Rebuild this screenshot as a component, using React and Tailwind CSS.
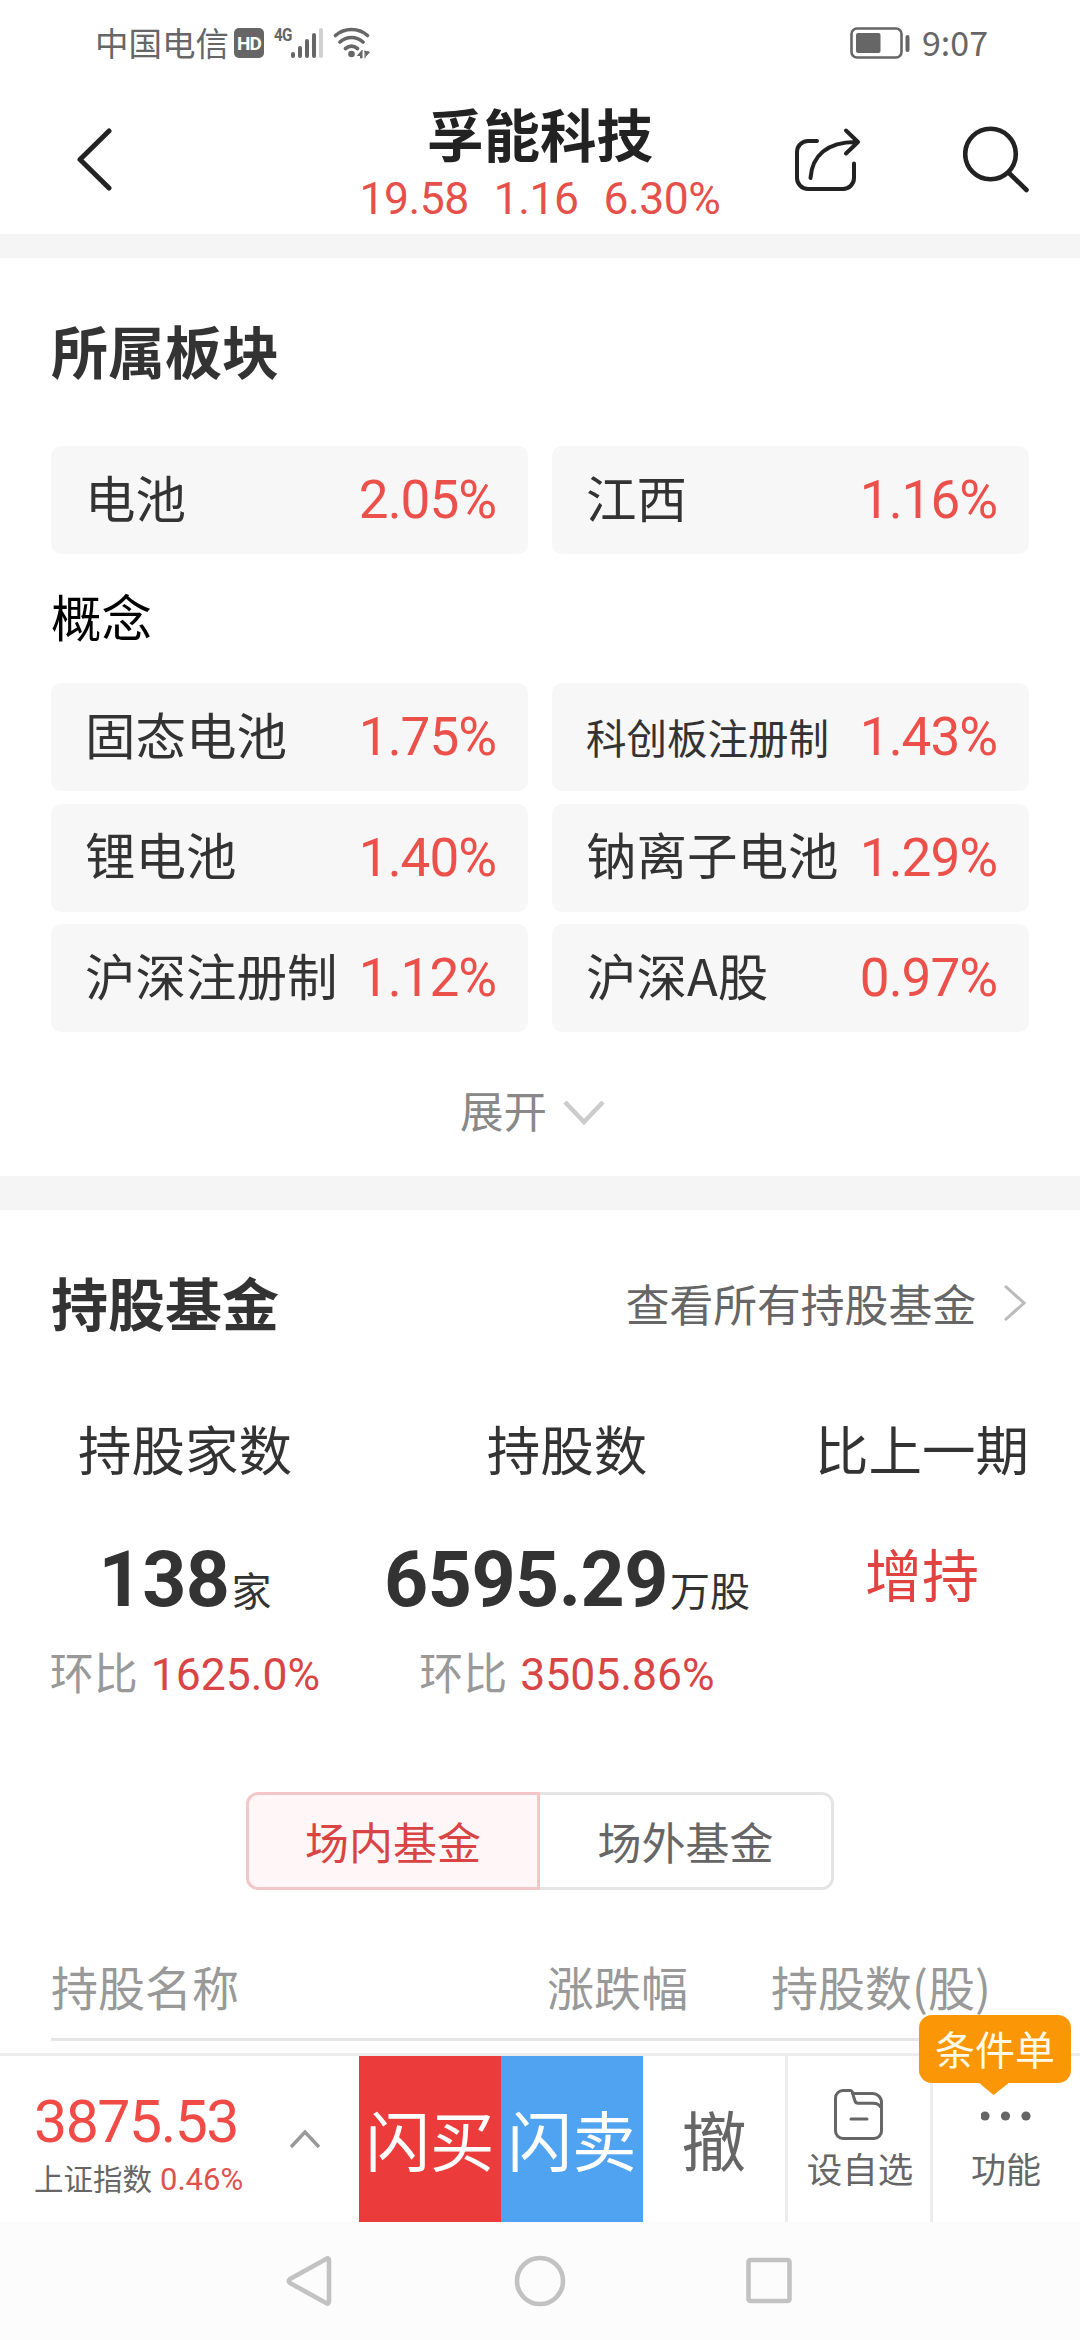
import React from 'react';
import { clsx } from 'clsx';

const sectors = [
    { name: '电池', change: '2.05%' },
    { name: '江西', change: '1.16%' },
];

const concepts = [
    { name: '固态电池', change: '1.75%' },
    { name: '科创板注册制', change: '1.43%', small: true },
    { name: '锂电池', change: '1.40%' },
    { name: '钠离子电池', change: '1.29%' },
    { name: '沪深注册制', change: '1.12%' },
    { name: '沪深A股', change: '0.97%' },
];

const Num = ({ className, children }) => (
    <span className={clsx("font-['Roboto','Noto_Sans_CJK_SC',sans-serif]", className)}>{children}</span>
);

const StatusBar = () => (
    <div className="h-[86px] pl-[95px] pr-[92px] flex items-center text-[#666]">
        <span className="-mt-[2px] text-[33.5px] leading-none">中国电信</span>
        <span className="ml-[5px] w-[30px] h-[30px] rounded-[5px] bg-[#666] text-white text-[19px] font-bold leading-none tracking-[-1px] flex items-center justify-center font-['Roboto',sans-serif]">HD</span>
        <span className="ml-[10px] -mt-[18px] w-[18px] text-[19px] font-bold leading-none tracking-[-1px] scale-x-[0.8] origin-left font-['Roboto',sans-serif]">4G</span>
        <svg className="-ml-[1px] w-[33px] h-[32px]" viewBox="0 0 33 32" fill="none" strokeWidth="4" strokeLinecap="round">
            <path d="M2 27v2M9 21v8M16 14v15M23 8v21" stroke="#666" />
            <path d="M30 3v26" stroke="#d0d0d0" />
        </svg>
        <svg className="ml-[9px] w-[38px] h-[32px]" viewBox="0 0 38 32" fill="none" stroke="#666" strokeWidth="3.6" strokeLinecap="round">
            <path d="M2.5 8.5C11.5 0.5 25.5 0.5 34.5 8.5M7 15C14 9 23 9 30 15M12.5 21.5C16.5 18.2 20.5 18.2 24.5 21.5" />
            <circle cx="18.5" cy="27" r="3.3" fill="#666" stroke="none" />
            <path d="M29 23.5V31H27.5V28.5H24.5L29 23.5ZM32 24V31M32 24.5L36.5 25L32.5 29.5" strokeWidth="1" fill="#666" />
        </svg>
        <svg className="ml-auto w-[60px] h-[32px]" viewBox="0 0 60 32" fill="none">
            <rect x="1.5" y="1.5" width="50" height="29" rx="5.5" stroke="#666" strokeWidth="2.6" />
            <rect x="6" y="6" width="24.5" height="20" rx="2" fill="#666" />
            <rect x="55.5" y="8" width="4" height="17" rx="2" fill="#666" />
        </svg>
        <span className="ml-[12px] -mt-[2px] text-[34px] leading-none">9:07</span>
    </div>
);

const Header = () => (
    <header className="h-[148px] px-[49px] grid grid-cols-[1fr_auto_1fr]">
        <svg className="mt-[41px] ml-[27px] w-[38px] h-[64px]" viewBox="0 0 38 64" fill="none" stroke="#222" strokeWidth="5" strokeLinecap="round" strokeLinejoin="round">
            <path d="M33 4L4 32.5L33 61" />
        </svg>
        <div className="flex flex-col items-center">
            <h1 className="mt-[16px] text-[56.5px] leading-[60px] font-bold text-[#222]">孚能科技</h1>
            <div className="mt-[14px] flex gap-[25px] text-[44.5px] leading-[46px] tracking-[-0.5px] text-[#e5504b]">
                <Num>19.58</Num>
                <Num>1.16</Num>
                <Num>6.30%</Num>
            </div>
        </div>
        <div className="mt-[38px] flex justify-end gap-[102px] text-[#222]">
            <svg className="w-[68px] h-[70px]" viewBox="0 0 68 70" fill="none" stroke="currentColor" strokeWidth="4" strokeLinecap="round" strokeLinejoin="round">
                <path d="M24 17H15A11 11 0 0 0 4 28V54A11 11 0 0 0 15 65H50A11 11 0 0 0 61 54V39.5" />
                <path d="M17.5 54C19 32 34 17.5 64 18M53 6.5L65 18L53 29.5" />
            </svg>
            <svg className="w-[68px] h-[70px]" viewBox="0 0 68 70" fill="none" stroke="currentColor" strokeWidth="4.6" strokeLinecap="round">
                <circle cx="27.5" cy="30" r="25.3" />
                <path d="M46 49L63.5 66" />
            </svg>
        </div>
    </header>
);

const SectorCard = ({ name, change, small }) => (
    <div className="h-[108px] pl-[34px] pr-[32px] rounded-[10px] bg-[#f7f7f7] flex items-center justify-between">
        <span className={clsx('text-[#333] leading-none', small ? 'text-[40.5px]' : 'text-[50.5px] -mt-[8px]')}>{name}</span>
        <Num className="mt-[1px] text-[53px] leading-none tracking-[-1px] text-[#ec504b]">{change}</Num>
    </div>
);

const SectionTitle = ({ children }) => (
    <h2 className="text-[57px] leading-[60px] font-bold text-[#333]">{children}</h2>
);

const Sectors = () => (
    <section className="h-[918px] px-[51px] pt-[61px]">
        <SectionTitle>所属板块</SectionTitle>
        <div className="mt-[67px] grid grid-cols-2 gap-x-6">
            {sectors.map((s) => <SectorCard key={s.name} {...s} />)}
        </div>
        <h3 className="mt-[35px] text-[50.5px] leading-[52px] text-black">概念</h3>
        <div className="mt-[42px] grid grid-cols-2 gap-x-6 gap-y-[12.5px]">
            {concepts.map((s) => <SectorCard key={s.name} {...s} />)}
        </div>
        <button className="mt-[54px] ml-[409px] flex items-center text-[43.5px] leading-[48px] text-[#888]">
            展开
            <svg className="ml-[16px] mt-[5px] w-[42px] h-[28px]" viewBox="0 0 42 28" fill="none" stroke="#ccc" strokeWidth="4.5">
                <path d="M2 3L21 23L40 3" />
            </svg>
        </button>
    </section>
);

const Stat = ({ value, unit, ratio }) => (
    <>
        <div className="flex items-baseline whitespace-nowrap text-[#333]">
            <Num className="text-[77px] leading-[80px] font-bold tracking-[-0.5px]">{value}</Num>
            <span className="ml-[2px] text-[40px] leading-none">{unit}</span>
        </div>
        <div className="flex items-baseline whitespace-nowrap text-[44px] leading-[48px] text-[#999]">
            环比
            <Num className="ml-[13px] text-[44.5px] text-[#d94545]">{ratio}</Num>
        </div>
    </>
);

const FundHoldings = () => (
    <section className="h-[843px] px-[51px] pt-[61px] flex flex-col">
        <div className="h-[60px] flex items-center justify-between">
            <SectionTitle>持股基金</SectionTitle>
            <a className="mt-[4px] flex items-center text-[43.8px] leading-[60px] text-[#666]">
                查看所有持股基金
                <svg className="ml-[27px] mr-[2px] w-[24px] h-[38px]" viewBox="0 0 24 38" fill="none" stroke="#bbb" strokeWidth="3">
                    <path d="M2 2L21 19L2 36" />
                </svg>
            </a>
        </div>

        <div className="mt-[87px] h-[281px] flex justify-between">
            <div className="w-[268px] flex flex-col items-center">
                <div className="text-[53.5px] leading-[60px] text-[#333]">持股家数</div>
                <div className="mt-[62px] h-[159px] flex flex-col items-center justify-between">
                    <Stat value="138" unit="家" ratio="1625.0%" />
                </div>
            </div>
            <div className="w-[370px] flex flex-col items-center">
                <div className="text-[53.5px] leading-[60px] text-[#333]">持股数</div>
                <div className="mt-[62px] h-[159px] flex flex-col items-center justify-between">
                    <Stat value="6595.29" unit="万股" ratio="3505.86%" />
                </div>
            </div>
            <div className="w-[214px] flex flex-col items-center">
                <div className="text-[53.5px] leading-[60px] text-[#333]">比上一期</div>
                <div className="mt-[64px] text-[57px] leading-[60px] text-[#e04340]">增持</div>
            </div>
        </div>

        <div className="mt-[93px] w-[588px] h-[98px] shrink-0 self-center flex text-[44px] leading-none">
            <button className="w-1/2 rounded-l-[12px] border-[3px] border-[#f3c6c8] bg-[#fff7f7] text-[#d94444]">场内基金</button>
            <button className="w-1/2 rounded-r-[12px] border-[3px] border-l-0 border-[#e5e5e5] text-[#666]">场外基金</button>
        </div>

        <div className="mt-[46px] h-[105px] pb-[3px] shrink-0 border-b-[3px] border-[#e5e5e5] flex items-center text-[47px] leading-none text-[#999]">
            <span className="w-[496px]">持股名称</span>
            <span className="w-[224px]">涨跌幅</span>
            <span>持股数(股)</span>
        </div>
    </section>
);

const BottomBar = () => (
    <div className="h-[169px] border-t-[3px] border-[#ededed] flex">
        <div className="w-[359px] pl-[34px] flex items-center">
            <div className="w-[255px] pt-[10px]">
                <Num className="block text-[59px] leading-[60px] tracking-[-1.5px] text-[#f04b47]">3875.53</Num>
                <div className="mt-[8px] flex items-baseline text-[29.5px] leading-[34px] text-[#666]">
                    上证指数
                    <Num className="ml-[8px] text-[31px] text-[#e0524e]">0.46%</Num>
                </div>
            </div>
            <svg className="w-[32px] h-[20px]" viewBox="0 0 32 20" fill="none" stroke="#999" strokeWidth="3.5">
                <path d="M2 18L16 3L30 18" />
            </svg>
        </div>
        <button className="w-[142px] pb-[2px] bg-[#eb3c3b] text-white text-[64.5px] leading-none">闪买</button>
        <button className="w-[142px] pb-[2px] bg-[#50a3f0] text-white text-[64.5px] leading-none">闪卖</button>
        <button className="w-[142px] pb-[2px] text-[#666] text-[65px] leading-none">撤</button>
        <div className="w-[145px] border-l-[3px] border-[#ededed] flex flex-col items-center text-[#666]">
            <svg className="mt-[32px] w-[50px] h-[54px]" viewBox="0 0 50 54" fill="none" stroke="currentColor" strokeWidth="3" strokeLinecap="round" strokeLinejoin="round">
                <path d="M9 2.5H16.5C18.5 2.5 18.5 5 19.5 5.5H38A9 9 0 0 1 47.5 15V43A7.5 7.5 0 0 1 40 50.5H9A7.5 7.5 0 0 1 1.5 43V10A7.5 7.5 0 0 1 9 2.5Z" />
                <path d="M18.5 5L21 13C21.6 14.8 22.5 15.2 24 15.2H39C43 15.2 46 17 47.3 20" />
                <path d="M17 31H33" />
            </svg>
            <span className="mt-[7px] ml-[2px] text-[35.5px] leading-[38px]">设自选</span>
        </div>
        <div className="relative flex-1 border-l-[3px] border-[#ededed] flex flex-col items-center text-[#666]">
            <svg className="mt-[54px] w-[52px] h-[12px]" viewBox="0 0 52 12" fill="currentColor">
                <circle cx="4" cy="6" r="4.6" />
                <circle cx="24.5" cy="6" r="4.6" />
                <circle cx="45" cy="6" r="4.6" />
            </svg>
            <span className="mt-[27px] mr-[1px] text-[35px] leading-[38px]">功能</span>
            {/* Tooltip over the menu entry */}
            <div className="absolute -top-[41px] -left-[14px] w-[152px] h-[68px] pb-[3px] rounded-[13px] bg-[#fb9606] text-[#fffbe8] text-[40px] leading-none flex items-center justify-center">
                条件单
                <svg className="absolute top-[67px] left-[59px] w-[32px] h-[13px]" viewBox="0 0 32 13" fill="#fb9606">
                    <path d="M0 0H32L15.5 13Z" />
                </svg>
            </div>
        </div>
    </div>
);

const SystemNav = () => (
    <nav className="h-[118px] bg-[#fcfcfc] flex items-center justify-center gap-[178px] text-[#c2c2c2]">
        <svg className="w-[52px] h-[52px]" viewBox="0 0 52 52" fill="none" stroke="currentColor" strokeWidth="4.6" strokeLinejoin="round">
            <path d="M43 3.5L6 24Q3.5 26 6 28L43 48.5Q45 49 45 46V6Q45 3 43 3.5Z" />
        </svg>
        <svg className="w-[52px] h-[52px]" viewBox="0 0 52 52" fill="none" stroke="currentColor" strokeWidth="4.6">
            <circle cx="26" cy="26" r="23" />
        </svg>
        <svg className="w-[52px] h-[52px]" viewBox="0 0 52 52" fill="none" stroke="currentColor" strokeWidth="4.6">
            <rect x="4.5" y="5" width="41" height="41" rx="2" />
        </svg>
    </nav>
);

export default function App() {
    return (
        <div className="w-[1080px] h-[2340px] overflow-hidden bg-white font-['Noto_Sans_CJK_SC',sans-serif]">
            <StatusBar />
            <Header />
            <div className="h-[24px] bg-[#f5f5f5]" />
            <Sectors />
            <div className="h-[34px] bg-[#f5f5f5]" />
            <FundHoldings />
            <BottomBar />
            <SystemNav />
        </div>
    );
}
